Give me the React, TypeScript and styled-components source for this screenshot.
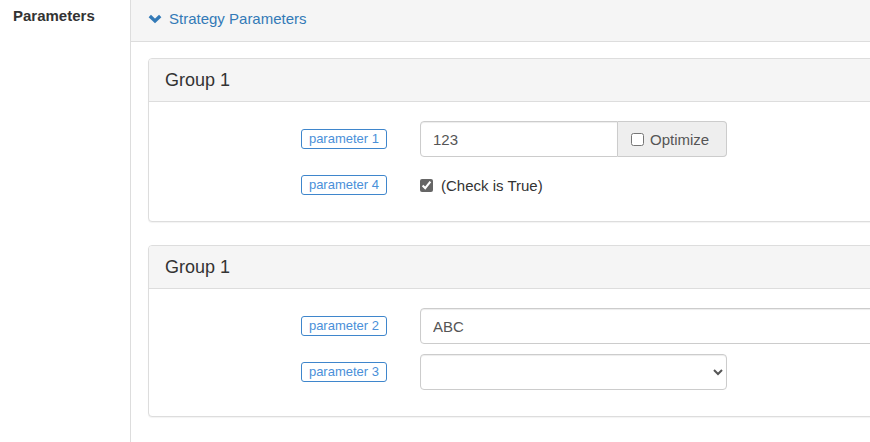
import React from "react";
import styled, { createGlobalStyle } from "styled-components";

const Global = createGlobalStyle`
  html, body { margin: 0; padding: 0; background: #fff; overflow: hidden; }
  body { font-family: "Liberation Sans", Arial, sans-serif; font-size: 15px; color: #333; }
  * { box-sizing: border-box; }
`;

const Page = styled.div`
  display: flex;
  width: 1060px;
  min-height: 100vh;
`;

const Side = styled.div`
  width: 131px;
  flex: none;
  border-right: 1px solid #ddd;
  padding: 6px 0 0 13px;
`;

const SideTitle = styled.div`
  font-weight: bold;
  font-size: 15px;
  line-height: 20px;
`;

const Main = styled.div`
  flex: 1;
  display: flex;
  flex-direction: column;
`;

const SectionHeader = styled.div`
  height: 42px;
  background: #f5f5f5;
  border-bottom: 1px solid #ddd;
  display: flex;
  align-items: center;
  gap: 7px;
  padding: 0 0 4px 17px;
  color: #337ab7;
  font-size: 15px;
`;

const Content = styled.div`
  padding: 16px 17px;
  display: flex;
  flex-direction: column;
  gap: 23px;
`;

const Panel = styled.div`
  border: 1px solid #ddd;
  border-radius: 4px;
  background: #fff;
  box-shadow: 0 1px 1px rgba(0, 0, 0, 0.05);
`;

const PanelHeading = styled.div`
  height: 43px;
  background: #f5f5f5;
  border-bottom: 1px solid #ddd;
  border-radius: 3px 3px 0 0;
  display: flex;
  align-items: center;
  padding: 0 16px;
  font-size: 18px;
  color: #333;
`;

const PanelBody = styled.div<{ $bottom: number }>`
  padding: 19px 0 ${(p) => p.$bottom}px;
  display: grid;
  grid-template-columns: 238px 1fr;
  column-gap: 33px;
  row-gap: 10px;
`;

const LabelCell = styled.div`
  height: 36px;
  display: flex;
  align-items: center;
  justify-content: flex-end;
`;

const Badge = styled.span`
  display: inline-block;
  border: 1px solid #3f86cc;
  border-radius: 3px;
  padding: 0 7px;
  height: 20px;
  line-height: 18px;
  font-size: 13px;
  color: #4a90d9;
  background: #fff;
`;

const ControlCell = styled.div<{ $narrow?: boolean }>`
  height: 36px;
  display: flex;
  align-items: center;
  ${(p) => (p.$narrow ? "width: 307px;" : "")}
`;

const InputGroup = styled.div`
  display: flex;
  width: 307px;
  height: 36px;
`;

const TextInput = styled.input<{ $grouped?: boolean }>`
  flex: 1;
  min-width: 0;
  width: 100%;
  height: 36px;
  padding: 0 12px;
  border: 1px solid #ccc;
  border-radius: ${(p) => (p.$grouped ? "4px 0 0 4px" : "4px")};
  font-family: inherit;
  font-size: 15px;
  color: #555;
  box-shadow: inset 0 1px 1px rgba(0, 0, 0, 0.075);
  outline: none;
`;

const Addon = styled.label`
  width: 109px;
  flex: none;
  display: flex;
  align-items: center;
  gap: 6px;
  padding: 0 0 0 13px;
  background: #eee;
  border: 1px solid #ccc;
  border-left: none;
  border-radius: 0 4px 4px 0;
  color: #555;
  font-size: 15px;
`;

const Check = styled.input`
  margin: 0;
  width: 13px;
  height: 13px;
  flex: none;
  accent-color: #666;
`;

const CheckLabel = styled.label`
  display: flex;
  align-items: center;
  gap: 8px;
  font-size: 15px;
  color: #333;
  padding-top: 1px;
`;

const Select = styled.select`
  width: 307px;
  height: 36px;
  border: 1px solid #ccc;
  border-radius: 4px;
  background: #fff;
  font-family: inherit;
  font-size: 15px;
  color: #555;
  padding: 0 8px;
  box-shadow: inset 0 1px 1px rgba(0, 0, 0, 0.075);
  outline: none;
`;

const Chevron = () => (
  <svg width="14" height="10" viewBox="0 0 14 10">
    <polyline points="1.8,2 7,7 12.2,2" fill="none" stroke="#337ab7" strokeWidth="3.4" strokeLinecap="butt" />
  </svg>
);

export default function App() {
  return (
    <>
      <Global />
      <Page>
        <Side>
          <SideTitle>Parameters</SideTitle>
        </Side>
        <Main>
          <SectionHeader>
            <Chevron />
            <span>Strategy Parameters</span>
          </SectionHeader>
          <Content>
            <Panel>
              <PanelHeading>Group 1</PanelHeading>
              <PanelBody $bottom={18}>
                <LabelCell>
                  <Badge>parameter 1</Badge>
                </LabelCell>
                <ControlCell>
                  <InputGroup>
                    <TextInput $grouped defaultValue="123" />
                    <Addon>
                      <Check type="checkbox" />
                      Optimize
                    </Addon>
                  </InputGroup>
                </ControlCell>
                <LabelCell>
                  <Badge>parameter 4</Badge>
                </LabelCell>
                <ControlCell>
                  <CheckLabel>
                    <Check type="checkbox" defaultChecked />
                    (Check is True)
                  </CheckLabel>
                </ControlCell>
              </PanelBody>
            </Panel>
            <Panel>
              <PanelHeading>Group 1</PanelHeading>
              <PanelBody $bottom={26}>
                <LabelCell>
                  <Badge>parameter 2</Badge>
                </LabelCell>
                <ControlCell>
                  <TextInput defaultValue="ABC" />
                </ControlCell>
                <LabelCell>
                  <Badge>parameter 3</Badge>
                </LabelCell>
                <ControlCell $narrow>
                  <Select defaultValue="">
                    <option value=""></option>
                  </Select>
                </ControlCell>
              </PanelBody>
            </Panel>
          </Content>
        </Main>
      </Page>
    </>
  );
}
